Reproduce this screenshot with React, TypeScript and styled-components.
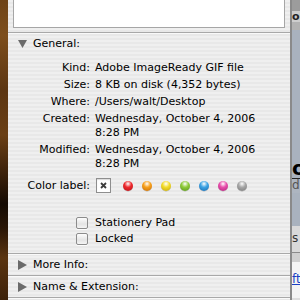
import React from 'react'
import styled, { createGlobalStyle } from 'styled-components'

const GlobalStyle = createGlobalStyle`
  html, body {
    margin: 0;
    padding: 0;
    overflow: hidden;
    background: #a9b2be;
  }
  body {
    font-family: "DejaVu Sans", "Liberation Sans", sans-serif;
    font-size: 11px;
    color: #000;
  }
`

const Screen = styled.div`
  display: flex;
  width: 300px;
  height: 300px;
  overflow: hidden;
`

const Wood = styled.div`
  width: 8px;
  flex: none;
  background: linear-gradient(
    180deg,
    #6e4418 0%,
    #7d4e1c 12%,
    #5c3612 30%,
    #6a3f15 45%,
    #3a200a 58%,
    #140a03 68%,
    #2a1607 76%,
    #5a3410 86%,
    #3e230b 100%
  );
`

const Panel = styled.div`
  width: 282px;
  flex: none;
  display: flex;
  flex-direction: column;
  background: repeating-linear-gradient(180deg, #efefef 0 2px, #e8e8e8 2px 4px);
`

const PreviewBox = styled.div`
  height: 27px;
  margin: 0 5px 4px;
  background: #fff;
  border: 1px solid #a6a6a6;
  border-top: none;
`

const Divider = styled.div`
  height: 1px;
  flex: none;
  background: #a8a8a8;
  border-bottom: 1px solid #f9f9f9;
`

const Header = styled.div`
  height: 20px;
  display: flex;
  align-items: center;
  gap: 6px;
  padding-left: 10px;
  line-height: 20px;
`

const Grid = styled.div<{ $top: number }>`
  display: grid;
  grid-template-columns: 82px 1fr;
  column-gap: 5px;
  row-gap: 3px;
  margin-top: ${p => p.$top}px;
  line-height: 14px;
`

const Label = styled.div`
  text-align: right;
  white-space: nowrap;
`

const Value = styled.div`
  white-space: nowrap;
`

const ColorRow = styled.div`
  display: grid;
  grid-template-columns: 82px 1fr;
  column-gap: 6px;
  margin-top: 7px;
  height: 15px;
  align-items: center;
  line-height: 15px;
`

const Swatches = styled.div`
  display: flex;
  align-items: center;
  gap: 9px;
`

const NoneBox = styled.div`
  width: 13px;
  height: 13px;
  margin-right: 3px;
  background: #fff;
  border: 1px solid #8e8e8e;
  box-shadow: inset 0 1px 1px rgba(0, 0, 0, 0.15);
  display: flex;
  align-items: center;
  justify-content: center;
`

const Dot = styled.div<{ $c: string; $d: string }>`
  width: 10px;
  height: 10px;
  border-radius: 50%;
  background: radial-gradient(circle at 50% 28%, #fff 0, ${p => p.$c} 40%, ${p => p.$d} 100%);
  box-shadow: 0 0.5px 0.5px rgba(0, 0, 0, 0.25);
`

const Checks = styled.div`
  display: flex;
  flex-direction: column;
  margin-top: 22px;
  margin-bottom: 6px;
`

const CheckRow = styled.label`
  display: grid;
  grid-template-columns: 80px 1fr;
  column-gap: 7px;
  height: 16px;
  align-items: center;
  line-height: 16px;
`

const Box = styled.span`
  justify-self: end;
  width: 10px;
  height: 10px;
  border: 1px solid #8c8c8c;
  border-radius: 2px;
  background: linear-gradient(180deg, #fdfdfd 0%, #e4e4e4 60%, #f4f4f4 100%);
  box-shadow: 0 1px 0 rgba(255, 255, 255, 0.8);
`

const BackWindow = styled.div`
  width: 8px;
  flex: none;
  display: flex;
  flex-direction: column;
  border-left: 2px solid #8a8a8a;
  overflow: hidden;
  white-space: nowrap;
`

const Strip = styled.div<{ $h: number; $bg: string }>`
  height: ${p => p.$h}px;
  flex: none;
  background: ${p => p.$bg};
  overflow: hidden;
`

const TabText = styled(Strip)`
  font-size: 11px;
  line-height: 11px;
  color: #222;
  font-weight: bold;
`

const BigText = styled(Strip)`
  font-size: 20px;
  font-weight: bold;
  line-height: 20px;
  border-bottom: 1px solid #222;
`

const SubText = styled(Strip)`
  font-size: 12px;
  line-height: 12px;
  color: #555;
`

const BarText = styled(Strip)`
  font-size: 12px;
  line-height: 24px;
  color: #333;
  border-bottom: 1px solid #8a8a8a;
  & span {
    color: #3a63c8;
  }
`

const LinkText = styled(Strip)`
  font-size: 12px;
  line-height: 18px;
  padding-top: 8px;
  color: #1b3fc4;
  text-decoration: underline;
`

const Triangle = ({ open }: { open?: boolean }) => (
  <svg width="9" height="10" viewBox="0 0 9 10">
    {open ? (
      <polygon points="0,1 9,1 4.5,9" fill="#6b6b6b" />
    ) : (
      <polygon points="0,0 9,5 0,10" fill="#6b6b6b" />
    )}
  </svg>
)

const colors: [string, string][] = [
  ['#ee2a2e', '#b30f16'],
  ['#f8a11c', '#c46a06'],
  ['#f3dc2a', '#c2a60c'],
  ['#8fcb3a', '#56921a'],
  ['#3ea4e4', '#1569b0'],
  ['#e84fac', '#b0217a'],
  ['#a8a8a8', '#777'],
]

const info: [string, string[]][] = [
  ['Kind:', ['Adobe ImageReady GIF file']],
  ['Size:', ['8 KB on disk (4,352 bytes)']],
  ['Where:', ['/Users/walt/Desktop']],
  ['Created:', ['Wednesday, October 4, 2006', '8:28 PM']],
  ['Modified:', ['Wednesday, October 4, 2006', '8:28 PM']],
]

export default function App() {
  return (
    <>
      <GlobalStyle />
      <Screen>
        <Wood />
        <Panel>
          <PreviewBox />
          <Divider />
          <Header>
            <Triangle open />
            General:
          </Header>
          <Grid $top={7}>
            {info.map(([k, v]) => (
              <React.Fragment key={k}>
                <Label>{k}</Label>
                <Value>
                  {v.map(line => (
                    <div key={line}>{line}</div>
                  ))}
                </Value>
              </React.Fragment>
            ))}
          </Grid>
          <ColorRow>
            <Label>Color label:</Label>
            <Swatches>
              <NoneBox>
                <svg width="7" height="7" viewBox="0 0 7 7">
                  <path d="M1 1L6 6M6 1L1 6" stroke="#3c3c3c" strokeWidth="1.8" />
                </svg>
              </NoneBox>
              {colors.map(([c, d]) => (
                <Dot key={c} $c={c} $d={d} />
              ))}
            </Swatches>
          </ColorRow>
          <Checks>
            <CheckRow>
              <Box />
              Stationery Pad
            </CheckRow>
            <CheckRow>
              <Box />
              Locked
            </CheckRow>
          </Checks>
          <Divider />
          <Header>
            <Triangle />
            More Info:
          </Header>
          <Divider />
          <Header>
            <Triangle />
            Name &amp; Extension:
          </Header>
          <Divider />
        </Panel>
        <BackWindow>
          <Strip $h={11} $bg="#9c9c9c" />
          <TabText $h={11} $bg="#cdcdcd">ormat</TabText>
          <Strip $h={8} $bg="#b2b2b2" />
          <Strip $h={128} $bg="#a9b2be" />
          <BigText $h={20} $bg="#a9b2be">on</BigText>
          <SubText $h={14} $bg="#adb5c0">di</SubText>
          <Strip $h={33} $bg="#a9b2be" />
          <BarText $h={26} $bg="#d9d9d9">
            s <span>“</span>
          </BarText>
          <Strip $h={9} $bg="#cfcfcf" />
          <LinkText $h={28} $bg="#f4f4f4">ftware</LinkText>
          <Strip $h={12} $bg="#dedede" />
        </BackWindow>
      </Screen>
    </>
  )
}
